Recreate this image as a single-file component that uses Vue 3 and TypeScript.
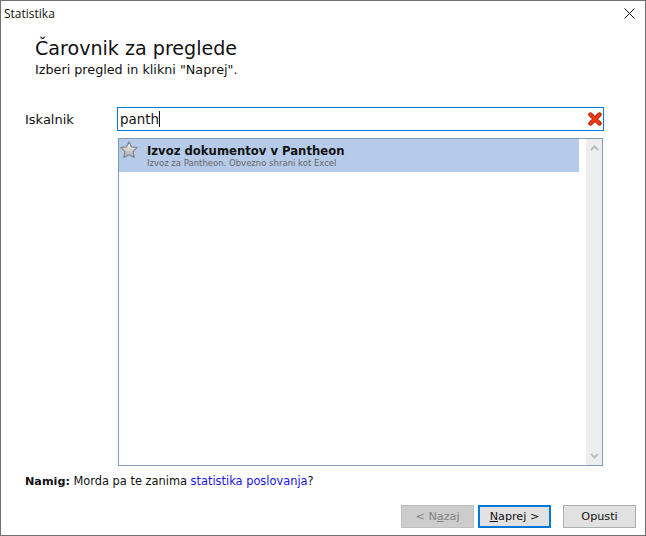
<script setup lang="ts">
import { ref } from 'vue'

const query = ref('panth')
</script>

<template>
  <div class="dialog">
    <div class="titlebar">
      <span class="titlebar-text">Statistika</span>
      <svg class="close" width="11" height="11" viewBox="0 0 11 11">
        <path d="M0.5 0.5 L10.5 10.5 M10.5 0.5 L0.5 10.5" stroke="#111" stroke-width="1" fill="none" />
      </svg>
    </div>

    <div class="head">
      <h1 class="wizard-title">Čarovnik za preglede</h1>
      <p class="wizard-sub">Izberi pregled in klikni "Naprej".</p>
    </div>

    <div class="search-row">
      <label class="search-label">Iskalnik</label>
      <div class="search-box">
        <span class="search-text">{{ query }}</span><span class="caret"></span>
        <svg class="clear" width="14" height="14" viewBox="0 0 14 14">
          <path d="M2.5 2.5 L11.5 11.5 M11.5 2.5 L2.5 11.5" stroke="#a01800" stroke-width="4.4" stroke-linecap="round" fill="none" />
          <path d="M2.5 2.5 L11.5 11.5 M11.5 2.5 L2.5 11.5" stroke="#ff3a10" stroke-width="2.6" stroke-linecap="round" fill="none" />
        </svg>
      </div>
    </div>

    <div class="list">
      <div class="list-main">
        <div class="item">
          <svg class="star" width="18" height="18" viewBox="0 0 17 17">
            <defs>
              <linearGradient id="starFill" x1="0" y1="0" x2="0" y2="1">
                <stop offset="0" stop-color="#f6f6f6" />
                <stop offset="1" stop-color="#a9abae" />
              </linearGradient>
            </defs>
            <path d="M8.5 0.8 L10.9 5.6 L16.2 6.2 L12.3 10 L13.5 15.6 L8.5 13 L3.5 15.6 L4.7 10 L0.8 6.2 L6.1 5.6 Z" fill="url(#starFill)" stroke="#85888c" stroke-width="1.1" stroke-linejoin="round" />
          </svg>
          <div class="item-text">
            <div class="item-title">Izvoz dokumentov v Pantheon</div>
            <div class="item-desc">Izvoz za Pantheon. Obvezno shrani kot Excel</div>
          </div>
        </div>
      </div>
      <div class="scrollbar">
        <svg width="9" height="6" viewBox="0 0 9 6"><path d="M1 5 L4.5 1.5 L8 5" stroke="#bdbdbd" stroke-width="2" fill="none" /></svg>
        <svg width="9" height="6" viewBox="0 0 9 6"><path d="M1 1 L4.5 4.5 L8 1" stroke="#bdbdbd" stroke-width="2" fill="none" /></svg>
      </div>
    </div>

    <p class="hint"><b>Namig:</b> Morda pa te zanima <a class="hint-link">statistika poslovanja</a>?</p>

    <div class="buttons">
      <button type="button" class="btn btn-disabled">&lt; N<u>a</u>zaj</button>
      <button type="button" class="btn btn-default"><u>N</u>aprej &gt;</button>
      <button type="button" class="btn btn-cancel">Opusti</button>
    </div>
  </div>
</template>

<style scoped>
.dialog {
  width: 646px;
  height: 536px;
  box-sizing: border-box;
  border: 1px solid #6f6f6f;
  background: #fff;
  display: flex;
  flex-direction: column;
  font-family: "DejaVu Sans", Verdana, sans-serif;
  color: #111;
  overflow: hidden;
}
.titlebar {
  height: 25px;
  flex-shrink: 0;
  display: flex;
  align-items: center;
  justify-content: space-between;
  padding: 0 10px 0 3px;
}
.titlebar-text { font-family: "Open Sans", sans-serif; font-size: 12px; }

.head { padding: 11px 0 0 34px; height: 70px; box-sizing: border-box; flex-shrink: 0; }
.wizard-title { margin: 0; font-size: 19.1px; line-height: 24px; font-weight: 400; }
.wizard-sub { margin: 1px 0 0; font-size: 12.75px; line-height: 16px; }

.search-row {
  display: flex;
  align-items: center;
  padding: 11px 41px 0 24px;
}
.search-label { width: 92px; font-size: 13px; flex-shrink: 0; }
.search-box {
  flex: 1;
  height: 24px;
  box-sizing: border-box;
  border: 1px solid #0078d7;
  display: flex;
  align-items: center;
  padding: 0 2px;
  font-size: 13.4px;
  position: relative;
}
.caret { display: inline-block; width: 1px; height: 16px; background: #111; }
.clear { position: absolute; right: 1px; top: 4px; }

.list {
  margin: 7px 0 0 117px;
  width: 485px;
  height: 328px;
  box-sizing: border-box;
  border: 1px solid #7f9db9;
  display: flex;
  justify-content: space-between;
}
.list-main { width: 460px; }
.item {
  height: 33px;
  background: #b5cbe9;
  display: flex;
}
.star { margin: 2px 0 0 1px; flex-shrink: 0; }
.item-text { margin-left: 9px; padding-top: 5px; }
.item-title { font-size: 11.65px; line-height: 15px; font-weight: 700; color: #111; white-space: nowrap; }
.item-desc { font-size: 8.5px; line-height: 11px; color: #666; white-space: nowrap; margin-top: -1px; }
.scrollbar {
  width: 16px;
  background: #eeeeee;
  display: flex;
  flex-direction: column;
  align-items: center;
  justify-content: space-between;
  padding: 6px 0;
  box-sizing: border-box;
}
.scrollbar svg { display: block; }

.hint { margin: 8px 0 0 24px; font-size: 11.4px; line-height: 14px; }
.hint b { font-weight: 700; font-size: 11.2px; }
.hint-link { color: #1a10e8; }

.buttons {
  display: flex;
  justify-content: flex-end;
  padding: 16px 9px 0 0;
}
.btn {
  width: 73px;
  height: 23px;
  box-sizing: border-box;
  font-family: "DejaVu Sans", Verdana, sans-serif;
  font-size: 11.2px;
  padding: 0;
  background: #e1e1e1;
  border: 1px solid #adadad;
  color: #111;
}
.btn-disabled { background: #cccccc; border-color: #bfbfbf; color: #838383; margin-right: 4px; }
.btn-default { border: 2px solid #0078d7; margin-right: 12px; }
</style>
